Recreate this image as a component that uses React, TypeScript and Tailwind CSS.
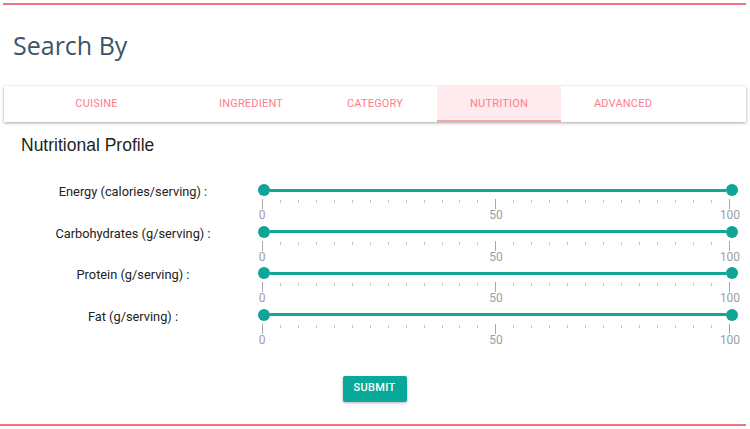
const tabs = [
  { label: "CUISINE", width: "w-[185px]" },
  { label: "INGREDIENT", width: "w-[124px]" },
  { label: "CATEGORY", width: "w-[124px]" },
  { label: "NUTRITION", width: "w-[124px]", active: true },
  { label: "ADVANCED", width: "w-[124px]" },
];

const nutrients = [
  "Energy (calories/serving) :",
  "Carbohydrates (g/serving) :",
  "Protein (g/serving) :",
  "Fat (g/serving) :",
];

const TICKS = 26;

function RangeSlider() {
  return (
    <div className="flex w-[480px] shrink-0 flex-col">
      {/* track with two thumbs */}
      <div className="flex h-[12px] w-[480px] items-center">
        <div className="h-[12px] w-[12px] rounded-full bg-[#0ea597]" />
        <div className="h-[3px] flex-1 bg-[#13a596]" />
        <div className="h-[12px] w-[12px] rounded-full bg-[#0ea597]" />
      </div>
      {/* ticks */}
      <div className="ml-[4px] mt-[3px] flex h-[10px] w-[468px] items-start justify-between">
        {Array.from({ length: TICKS + 1 }).map((_, i) =>
          i % 13 === 0 ? (
            <div key={i} className="h-[10px] w-px bg-[#a8a8a8]" />
          ) : (
            <div key={i} className="mt-[1px] h-[3px] w-px bg-[#c8c8c8]" />
          )
        )}
      </div>
      {/* values */}
      <div className="ml-[-16px] mt-[-1px] flex w-[508px] justify-between text-[12px] leading-[14px] text-[#9e9e9e]">
        <span className="w-[40px] text-center">0</span>
        <span className="w-[40px] text-center">50</span>
        <span className="w-[40px] text-center">100</span>
      </div>
    </div>
  );
}

export default function App() {
  return (
    <div className="h-[429px] w-[750px] overflow-hidden bg-white font-['Roboto',sans-serif]">
      <div className="pl-[3px] pr-[4px] pt-[3px]">
        <div className="h-[2px] bg-[#f27483]" />
        <h1 className="mt-[24px] pl-[10px] font-['Open_Sans',sans-serif] text-[25px] leading-[32px] text-[#3a5566]">
          Search By
        </h1>
        <div className="ml-[1px] mt-[25px] flex h-[36px] bg-white shadow-[0_1px_3px_rgba(0,0,0,0.35)]">
          {tabs.map((t) => (
            <div
              key={t.label}
              className={`${t.width} flex items-center justify-center text-[11px] tracking-[0.2px] text-[#ff7b8c] ${
                t.active ? "border-b-2 border-[#f9a3ac] bg-[#fdebed] pt-[2px]" : ""
              }`}
            >
              {t.label}
            </div>
          ))}
        </div>
        <h2 className="mt-[12px] pl-[18px] font-['Liberation_Sans',sans-serif] text-[17.5px] leading-[22px] text-[#1f1f1f]">
          Nutritional Profile
        </h2>
        <div className="mt-[28px] flex flex-col">
          {nutrients.map((n) => (
            <div key={n} className="flex h-[41.67px] items-start gap-[13px] pl-[18px]">
              <div className="w-[224px] shrink-0 text-center text-[12.8px] leading-[16px] text-[#222]">
                {n}
              </div>
              <RangeSlider />
            </div>
          ))}
        </div>
        <div className="mt-[25px] flex justify-center">
          <button className="h-[26px] w-[64px] rounded-[2px] bg-[#0aa898] text-[11px] font-medium tracking-[0.3px] text-white shadow-[0_1px_3px_rgba(0,0,0,0.3)]">
            SUBMIT
          </button>
        </div>
      </div>
      <div className="mr-[4px] mt-[22px] h-[2px] bg-[#f27483]" />
    </div>
  );
}
